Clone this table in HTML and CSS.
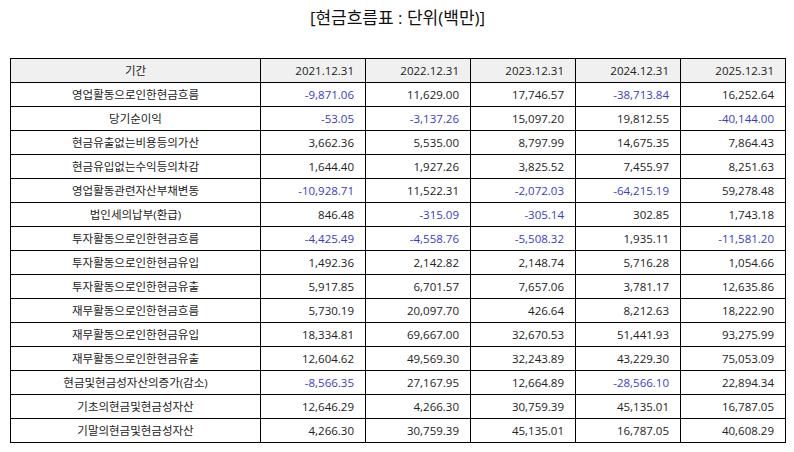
FILE: index.html
```html
<!DOCTYPE html>
<html lang="ko">
<head>
<meta charset="utf-8">
<title>현금흐름표</title>
<link rel="stylesheet" href="styles.css">
</head>
<body>
<div class="page">
  <h1 class="title">[현금흐름표 : 단위(백만)]</h1>
  <table class="cf">
    <colgroup>
      <col class="c-label"><col class="c-num"><col class="c-num"><col class="c-num"><col class="c-num"><col class="c-num">
    </colgroup>
    <thead>
      <tr><th class="lbl">기간</th><th>2021.12.31</th><th>2022.12.31</th><th>2023.12.31</th><th>2024.12.31</th><th>2025.12.31</th></tr>
    </thead>
    <tbody>
      <tr><td class="lbl">영업활동으로인한현금흐름</td><td class="neg">-9,871.06</td><td>11,629.00</td><td>17,746.57</td><td class="neg">-38,713.84</td><td>16,252.64</td></tr>
      <tr><td class="lbl">당기순이익</td><td class="neg">-53.05</td><td class="neg">-3,137.26</td><td>15,097.20</td><td>19,812.55</td><td class="neg">-40,144.00</td></tr>
      <tr><td class="lbl">현금유출없는비용등의가산</td><td>3,662.36</td><td>5,535.00</td><td>8,797.99</td><td>14,675.35</td><td>7,864.43</td></tr>
      <tr><td class="lbl">현금유입없는수익등의차감</td><td>1,644.40</td><td>1,927.26</td><td>3,825.52</td><td>7,455.97</td><td>8,251.63</td></tr>
      <tr><td class="lbl">영업활동관련자산부채변동</td><td class="neg">-10,928.71</td><td>11,522.31</td><td class="neg">-2,072.03</td><td class="neg">-64,215.19</td><td>59,278.48</td></tr>
      <tr><td class="lbl">법인세의납부(환급)</td><td>846.48</td><td class="neg">-315.09</td><td class="neg">-305.14</td><td>302.85</td><td>1,743.18</td></tr>
      <tr><td class="lbl">투자활동으로인한현금흐름</td><td class="neg">-4,425.49</td><td class="neg">-4,558.76</td><td class="neg">-5,508.32</td><td>1,935.11</td><td class="neg">-11,581.20</td></tr>
      <tr><td class="lbl">투자활동으로인한현금유입</td><td>1,492.36</td><td>2,142.82</td><td>2,148.74</td><td>5,716.28</td><td>1,054.66</td></tr>
      <tr><td class="lbl">투자활동으로인한현금유출</td><td>5,917.85</td><td>6,701.57</td><td>7,657.06</td><td>3,781.17</td><td>12,635.86</td></tr>
      <tr><td class="lbl">재무활동으로인한현금흐름</td><td>5,730.19</td><td>20,097.70</td><td>426.64</td><td>8,212.63</td><td>18,222.90</td></tr>
      <tr><td class="lbl">재무활동으로인한현금유입</td><td>18,334.81</td><td>69,667.00</td><td>32,670.53</td><td>51,441.93</td><td>93,275.99</td></tr>
      <tr><td class="lbl">재무활동으로인한현금유출</td><td>12,604.62</td><td>49,569.30</td><td>32,243.89</td><td>43,229.30</td><td>75,053.09</td></tr>
      <tr><td class="lbl">현금및현금성자산의증가(감소)</td><td class="neg">-8,566.35</td><td>27,167.95</td><td>12,664.89</td><td class="neg">-28,566.10</td><td>22,894.34</td></tr>
      <tr><td class="lbl">기초의현금및현금성자산</td><td>12,646.29</td><td>4,266.30</td><td>30,759.39</td><td>45,135.01</td><td>16,787.05</td></tr>
      <tr><td class="lbl">기말의현금및현금성자산</td><td>4,266.30</td><td>30,759.39</td><td>45,135.01</td><td>16,787.05</td><td>40,608.29</td></tr>
    </tbody>
  </table>
</div>
</body>
</html>
```
FILE: styles.css
```css
html, body {
  margin: 0;
  padding: 0;
  background: #fff;
}
.page {
  padding: 0 9px 0 10px;
  font-family: "Open Sans", "Noto Sans CJK KR", sans-serif;
  color: #222;
}
.title {
  margin: 0;
  height: 58px;
  padding-top: 6px;
  box-sizing: border-box;
  text-align: center;
  font-size: 17px;
  font-weight: normal;
  line-height: 24px;
  color: #111;
}
.cf {
  border-collapse: collapse;
  width: 775px;
  table-layout: fixed;
  font-size: 11.5px;
}
.c-label { width: 250px; }
.c-num { width: 105px; }
.cf th, .cf td {
  border: 1px solid #000;
  height: 23px;
  padding: 0 11px 0 4px;
  text-align: right;
  font-weight: normal;
  line-height: 22px;
  white-space: nowrap;
}
.cf th {
  background: #f0f0f0;
}
.cf .lbl {
  text-align: center;
  padding: 0 4px;
}
.cf .neg {
  color: #3a3ad2;
}
```
